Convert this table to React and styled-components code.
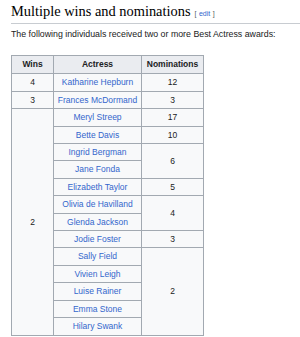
import React from "react";
import styled, { createGlobalStyle } from "styled-components";

const Global = createGlobalStyle`
  html, body { margin: 0; padding: 0; background: #ffffff; }
  body { font-family: "Liberation Sans", Arial, sans-serif; color: #202122; }
`;

const Page = styled.div`
  padding: 0 0 0 11px;
  width: 300px;
  box-sizing: border-box;
`;

const Heading = styled.h2`
  margin: 0;
  padding: 4px 0 5px 0;
  display: flex;
  align-items: baseline;
  gap: 4px;
  border-bottom: 1px solid #c8ccd1;
  font-family: "Liberation Serif", "Times New Roman", serif;
  font-weight: normal;
  font-size: 14.4px;
  line-height: 14px;
  color: #000;
`;

const EditLink = styled.span`
  font-family: "Liberation Sans", Arial, sans-serif;
  font-size: 7px;
  line-height: 8px;
  color: #54595d;
  a { color: #3366cc; text-decoration: none; margin: 0 2.5px; }
`;

const Intro = styled.p`
  margin: 4px 0 0 0;
  font-size: 8.8px;
  line-height: 12px;
  color: #202122;
`;

const Table = styled.table`
  margin-top: 15px;
  border-collapse: collapse;
  table-layout: fixed;
  background: #f8f9fa;
  border: 1px solid #a2a9b1;
  font-size: 8.5px;
  color: #202122;
`;

const Th = styled.th`
  background: #eaecf0;
  border: 1px solid #a2a9b1;
  padding: 2px 0;
  line-height: 13.4px;
  font-weight: bold;
  text-align: center;
  white-space: nowrap;
  width: ${(p) => p.$w}px;
`;

const Td = styled.td`
  border: 1px solid #a2a9b1;
  padding: 2px 0;
  line-height: 12.4px;
  text-align: center;
  white-space: nowrap;
  color: ${(p) => (p.$link ? "#3366cc" : "#202122")};
`;

const rows = [
  { wins: "4", winsSpan: 1, name: "Katharine Hepburn", noms: "12", nomsSpan: 1 },
  { wins: "3", winsSpan: 1, name: "Frances McDormand", noms: "3", nomsSpan: 1 },
  { wins: "2", winsSpan: 13, name: "Meryl Streep", noms: "17", nomsSpan: 1 },
  { name: "Bette Davis", noms: "10", nomsSpan: 1 },
  { name: "Ingrid Bergman", noms: "6", nomsSpan: 2 },
  { name: "Jane Fonda" },
  { name: "Elizabeth Taylor", noms: "5", nomsSpan: 1 },
  { name: "Olivia de Havilland", noms: "4", nomsSpan: 2 },
  { name: "Glenda Jackson" },
  { name: "Jodie Foster", noms: "3", nomsSpan: 1 },
  { name: "Sally Field", noms: "2", nomsSpan: 5 },
  { name: "Vivien Leigh" },
  { name: "Luise Rainer" },
  { name: "Emma Stone" },
  { name: "Hilary Swank" },
];

export default function App() {
  return (
    <>
      <Global />
      <Page>
        <Heading>
          Multiple wins and nominations
          <EditLink>
            [<a>edit</a>]
          </EditLink>
        </Heading>
        <Intro>The following individuals received two or more Best Actress awards:</Intro>
        <Table>
          <thead>
            <tr>
              <Th $w={41}>Wins</Th>
              <Th $w={87}>Actress</Th>
              <Th $w={61}>Nominations</Th>
            </tr>
          </thead>
          <tbody>
            {rows.map((r) => (
              <tr key={r.name}>
                {r.wins && <Td rowSpan={r.winsSpan}>{r.wins}</Td>}
                <Td $link>{r.name}</Td>
                {r.noms && <Td rowSpan={r.nomsSpan}>{r.noms}</Td>}
              </tr>
            ))}
          </tbody>
        </Table>
      </Page>
    </>
  );
}
